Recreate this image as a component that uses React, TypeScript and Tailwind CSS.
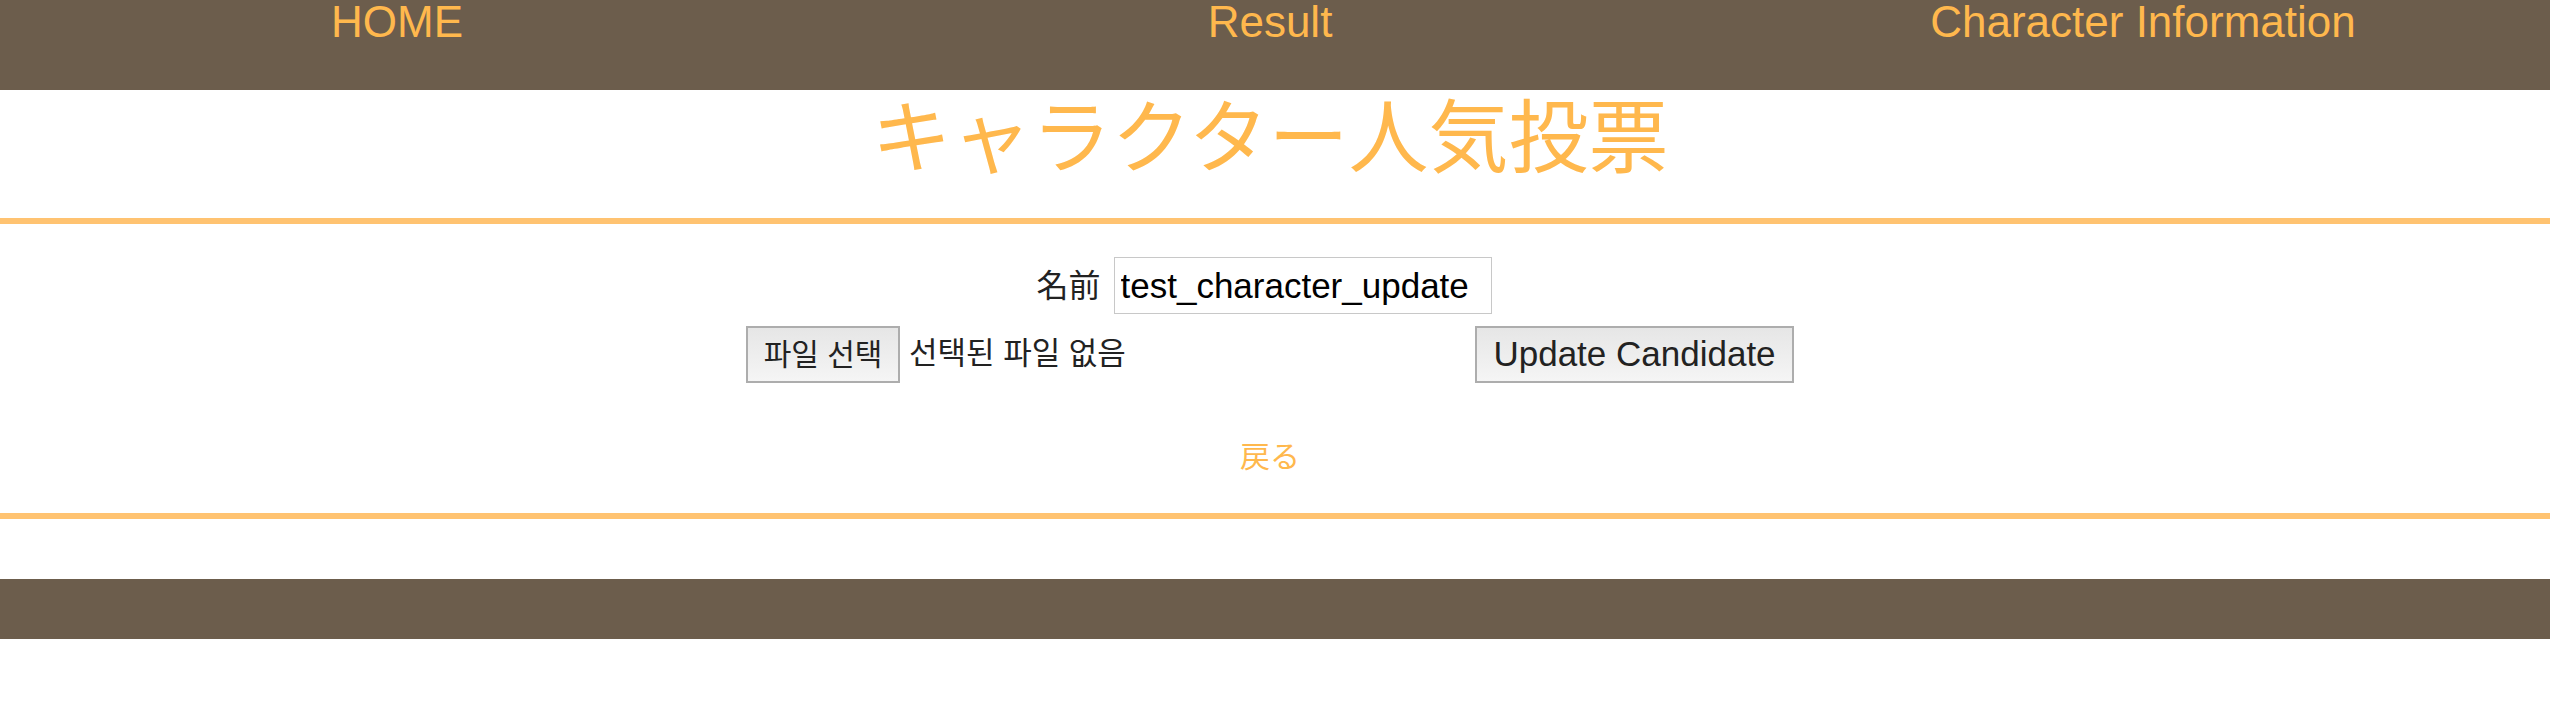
// キャラクター編集ページ — ヘッダー / タイトル / 更新フォーム / フッター
import { useState } from "react";

const NAV = ["HOME", "Result", "Character Information"];

export default function App() {
  const [name, setName] = useState("test_character_update");

  return (
    <div className="min-h-[720px] bg-white font-['Liberation_Sans','Noto_Sans_CJK_JP',sans-serif]">
      <header className="h-[90px] overflow-hidden bg-[#6c5d4c]">
        <nav className="flex justify-center pr-[10px]">
          {NAV.map((item) => (
            <a
              key={item}
              href="#"
              className="w-[873px] shrink-0 text-center text-[44px] leading-[43px] text-[#ffb84d]"
            >
              {item}
            </a>
          ))}
        </nav>
      </header>

      <h1 className="pr-[10px] pt-[9px] pb-[39px] text-center text-[80px] leading-[80px] font-normal text-[#ffb84d]">
        キャラクター人気投票
      </h1>
      <div className="h-[6px] bg-[#ffc371]" />

      <form className="pt-[33px] pb-[39px]" onSubmit={(e) => e.preventDefault()}>
        {/* 名前 */}
        <div className="flex h-[57px] items-center justify-center gap-[13px] pr-[22px]">
          <label className="text-[32px] text-[#222]">名前</label>
          <input
            value={name}
            onChange={(e) => setName(e.target.value)}
            className="h-[57px] w-[378px] border border-[#c8c8c8] px-[6px] text-[35px] text-black outline-none"
          />
        </div>

        {/* ファイル + 更新ボタン */}
        <div className="mt-[12px] flex h-[57px] items-center justify-center gap-[8px] pr-[10px]">
          <div className="flex w-[721px] items-center font-['Liberation_Sans','Noto_Sans_CJK_KR',sans-serif]">
            <button
              type="button"
              className="h-[57px] w-[154px] border-2 border-[#adadad] bg-gradient-to-b from-[#e6e6e6] to-[#f5f5f5] text-[30px] text-[#222]"
            >
              파일 선택
            </button>
            <span className="ml-[9px] text-[31px] text-[#222]">선택된 파일 없음</span>
          </div>
          <button
            type="submit"
            className="h-[57px] w-[319px] border-2 border-[#adadad] bg-gradient-to-b from-[#e6e6e6] to-[#f5f5f5] text-[35px] text-[#222]"
          >
            Update Candidate
          </button>
        </div>

        <div className="mt-[59px] pr-[10px] text-center">
          <a href="#" className="text-[30px] leading-[30px] text-[#ffb84d]">
            戻る
          </a>
        </div>
      </form>
      <div className="h-[6px] bg-[#ffc371]" />

      <footer className="mt-[60px] h-[60px] bg-[#6c5d4c]" />
    </div>
  );
}
